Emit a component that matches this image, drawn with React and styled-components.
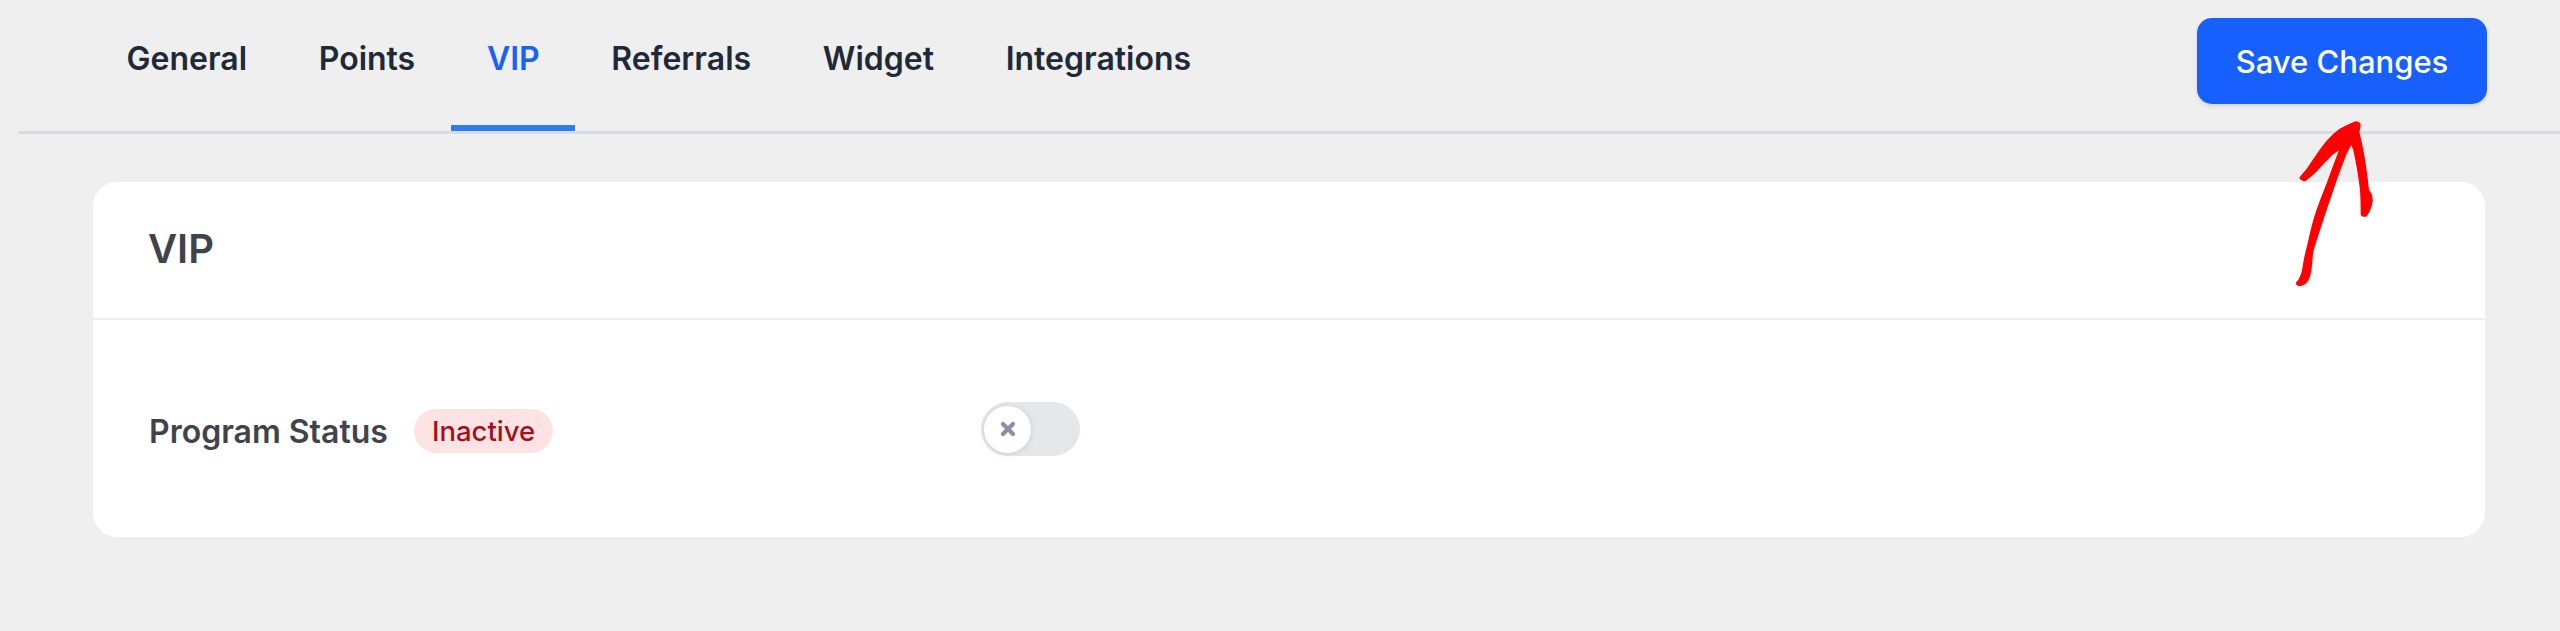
import React from "react";
import styled, { createGlobalStyle } from "styled-components";
import { X } from "lucide-react";

const GlobalStyle = createGlobalStyle`
  *, *::before, *::after {
    box-sizing: border-box;
  }
  html, body {
    margin: 0;
    padding: 0;
    background: #efefef;
  }
  body {
    font-family: Inter, "Liberation Sans", sans-serif;
  }
`;

const Page = styled.div`
  position: relative;
  width: 2560px;
  height: 631px;
  overflow: hidden;
  background: #efefef;
`;

const TopBar = styled.header`
  display: flex;
  align-items: flex-start;
  justify-content: space-between;
  height: 134px;
  margin-left: 18px;
  padding: 18px 73px 0 73px;
  border-bottom: 3px solid #d9dbdd;
`;

const Tabs = styled.nav`
  display: flex;
  gap: 0.7px;
  margin-top: -18px;
`;

const Tab = styled.a`
  display: block;
  height: 131px;
  padding: 0 35.5px;
  line-height: 118px;
  font-size: 32px;
  font-weight: 600;
  color: ${(p) => (p.$active ? "#1a62f2" : "#1f2937")};
  border-bottom: 6px solid ${(p) => (p.$active ? "#2f7bea" : "transparent")};
`;

const SaveButton = styled.button`
  width: 290px;
  height: 86px;
  border: 0;
  border-radius: 15px;
  background: #1760fd;
  box-shadow: 0 2px 4px rgba(0, 0, 0, 0.12);
  color: #fff;
  font-family: inherit;
  font-size: 31px;
  font-weight: 500;
`;

const Card = styled.section`
  width: 2392px;
  height: 355px;
  margin: 48px 0 0 93px;
  border-radius: 24px;
  background: #fff;
`;

const CardHeader = styled.div`
  display: flex;
  align-items: center;
  height: 138px;
  padding: 0 0 3px 55px;
  border-bottom: 2px solid #eceeef;
`;

const CardTitle = styled.h2`
  margin: 0;
  font-size: 40px;
  font-weight: 600;
  color: #3f444b;
`;

const Row = styled.div`
  display: flex;
  align-items: center;
  padding: 82px 0 0 56px;
`;

const Label = styled.div`
  display: flex;
  align-items: center;
  gap: 26px;
  width: 832px;
  margin-top: 4px;
  font-size: 32px;
  font-weight: 600;
  color: #3f444b;
`;

const Badge = styled.span`
  display: inline-flex;
  align-items: center;
  height: 44px;
  padding: 0 18px;
  border-radius: 22px;
  background: #fde3e3;
  color: #a50e1e;
  font-size: 27.5px;
  font-weight: 500;
`;

const Toggle = styled.div`
  display: flex;
  align-items: center;
  width: 99px;
  height: 54px;
  padding: 0 3px;
  border-radius: 27px;
  background: #e5e7ea;
`;

const Knob = styled.div`
  display: flex;
  align-items: center;
  justify-content: center;
  width: 47px;
  height: 47px;
  border-radius: 50%;
  background: #fff;
  color: #8b8fa3;
  box-shadow: 0 1px 6px rgba(0, 0, 0, 0.12);
`;

const Arrow = styled.svg`
  position: absolute;
  left: 2260px;
  top: 110px;
  width: 130px;
  height: 190px;
`;

const tabs = ["General", "Points", "VIP", "Referrals", "Widget", "Integrations"];

const arrowOutline =
  "M300 42 Q300 56 296 65 Q304 100 310 130 Q320 190 325 240 Q338 258 336 275 Q332 300 318 318 Q306 320 304 312 " +
  "Q304 270 302 240 Q296 185 282 120 Q276 104 274 100 Q256 130 245 165 Q228 208 215 250 Q194 310 175 370 " +
  "Q160 415 157 430 Q154 480 148 500 Q140 525 118 527 Q108 524 110 518 Q125 505 130 470 Q134 440 145 400 " +
  "Q155 350 168 310 Q185 262 202 220 Q222 165 240 118 Q225 124 215 134 Q190 158 170 182 L135 212 Q122 210 120 203 " +
  "Q142 180 160 150 Q180 120 200 95 Q220 72 240 58 Q265 44 285 36 Q296 36 300 42 Z";

export default function App() {
  return (
    <Page>
      <GlobalStyle />
      <TopBar>
        <Tabs>
          {tabs.map((t) => (
            <Tab key={t} $active={t === "VIP"}>
              {t}
            </Tab>
          ))}
        </Tabs>
        <SaveButton>Save Changes</SaveButton>
      </TopBar>
      <Card>
        <CardHeader>
          <CardTitle>VIP</CardTitle>
        </CardHeader>
        <Row>
          <Label>
            Program Status
            <Badge>Inactive</Badge>
          </Label>
          <Toggle>
            <Knob>
              <X size={20} strokeWidth={5} />
            </Knob>
          </Toggle>
        </Row>
      </Card>
      <Arrow viewBox="0 0 390 570">
        <path d={arrowOutline} fill="#fe0000" stroke="#fe0000" strokeWidth="4" strokeLinejoin="round" />
      </Arrow>
    </Page>
  );
}
